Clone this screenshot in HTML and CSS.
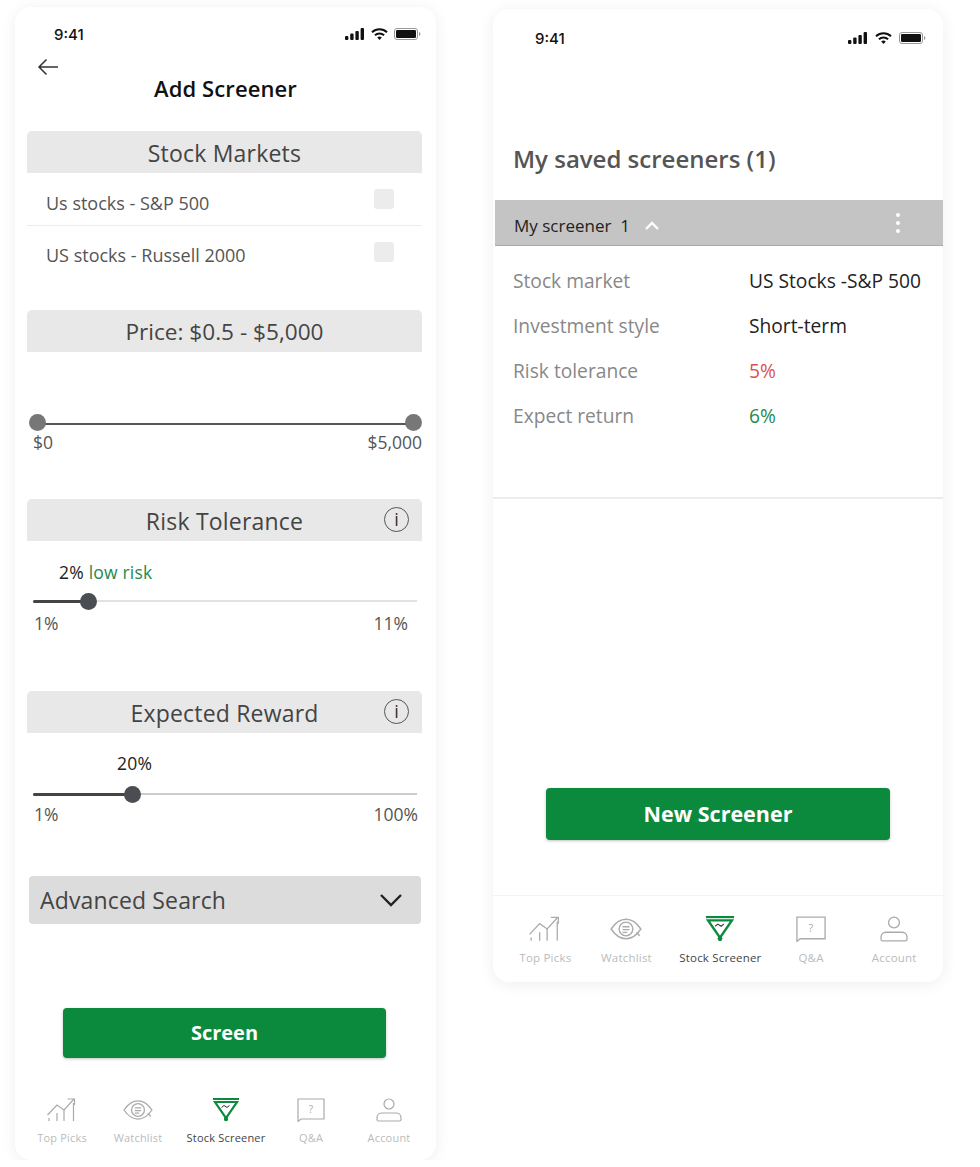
FILE: index.html
```html
<!DOCTYPE html>
<html>
<head>
  <title>Stock Screener</title>
  <link rel="stylesheet" href="styles.css">
</head>
<body>

  <svg class="icon-defs" width="0" height="0">
    <symbol id="status-signal" viewBox="0 0 20 12">
      <rect x="0" y="8" width="3.4" height="4" rx="1"/>
      <rect x="5.2" y="5.6" width="3.4" height="6.4" rx="1"/>
      <rect x="10.4" y="3" width="3.4" height="9" rx="1"/>
      <rect x="15.6" y="0" width="3.4" height="12" rx="1"/>
    </symbol>
    <symbol id="status-wifi" viewBox="0 0 17 12">
      <path d="M1 4.2a11 11 0 0 1 15 0" fill="none" stroke="currentColor" stroke-width="2"/>
      <path d="M3.9 7.2a6.8 6.8 0 0 1 9.2 0" fill="none" stroke="currentColor" stroke-width="2"/>
      <path d="M6.2 9.6a3.4 3.4 0 0 1 4.6 0L8.5 12z"/>
    </symbol>
    <symbol id="status-battery" viewBox="0 0 27 12">
      <rect x="0.5" y="0.5" width="23" height="11" rx="2.5" fill="none" stroke="#999"/>
      <rect x="2" y="2" width="20" height="8" rx="1.2"/>
      <path d="M25 4v4a2 2 0 0 0 1.4-2A2 2 0 0 0 25 4z" fill="#999"/>
    </symbol>

    <symbol id="tab-picks" viewBox="0 0 30 24">
      <g fill="none" stroke="#aaa" stroke-width="1.2">
        <path d="M0.500 17 10 7l7 5L27 1"/>
        <path d="M20.500 1h7v6"/>
        <path d="M26.500 5v18M17 12v11M10 15v8M2 20v3"/>
      </g>
    </symbol>
    <symbol id="tab-eye" viewBox="0 0 28 20">
      <g fill="none" stroke="#aaa" stroke-width="1.2">
        <path d="M1 10C5 4 9 1.500 14 1.500S23 4 27 10c-4 6-8 8.500-13 8.500S5 16 1 10z"/>
        <circle cx="14" cy="10" r="6"/>
        <path d="M11 8h6M11 10.500h6M11 13h4M23 13l3 3"/>
      </g>
    </symbol>
    <symbol id="tab-funnel" viewBox="0 0 28 24">
      <path d="M1 1h26" fill="none" stroke="#0b8a3e" stroke-width="2"/>
      <path d="M3 4h22L14 20z" fill="none" stroke="#0b8a3e" stroke-width="2.200"/>
      <path d="M9.500 9.500l2.500-2 3 2 2.500-2" fill="none" stroke="#333" stroke-width="1"/>
      <circle cx="14" cy="21" r="2.200" fill="#0b8a3e"/>
    </symbol>
    <symbol id="tab-account" viewBox="0 0 26 24">
      <g fill="none" stroke="#aaa" stroke-width="1.200">
        <circle cx="13" cy="6" r="5"/>
        <path d="M1 21.500v-2c0-3 2.500-4.500 5-4.500h14c2.500 0 5 1.500 5 4.500v2c0 1-.5 1.500-1.500 1.500h-21c-1 0-1.500-.5-1.500-1.500z"/>
      </g>
    </symbol>
  </svg>

  <!-- Add screener phone -->
  <div class="phone phone-add">
    <div class="status-bar">
      <span class="status-time">9:41</span>
      <div class="status-icons">
        <svg class="ic-signal"><use href="#status-signal"/></svg>
        <svg class="ic-wifi"><use href="#status-wifi"/></svg>
        <svg class="ic-battery"><use href="#status-battery"/></svg>
      </div>
    </div>

    <div class="back-row">
      <svg class="back-arrow" viewBox="0 0 22 18">
        <path d="M21 9H2M9.500 1.500 2 9l7.500 7.500" fill="none" stroke="#333" stroke-width="1.500"/>
      </svg>
    </div>
    <h1 class="page-title">Add Screener</h1>

    <div class="section section-markets">
      <div class="section-head">Stock Markets</div>
      <div class="market-row market-first">
        <span>Us stocks - S&amp;P 500</span>
        <span class="checkbox"></span>
      </div>
      <div class="market-row market-second">
        <span>US stocks - Russell 2000</span>
        <span class="checkbox"></span>
      </div>
    </div>

    <div class="section section-price">
      <div class="section-head">Price: $0.5 - $5,000</div>
      <div class="range-track">
        <span class="range-dot range-dot-left"></span>
        <span class="range-dot range-dot-right"></span>
      </div>
      <div class="range-labels">
        <span>$0</span>
        <span>$5,000</span>
      </div>
    </div>

    <div class="section section-risk">
      <div class="section-head">
        Risk Tolerance
        <span class="info">i</span>
      </div>
      <div class="slider-value slider-value-risk">2% <span class="txt-green">low risk</span></div>
      <div class="slider">
        <div class="slider-fill" style="width: 55px"><span class="slider-thumb"></span></div>
      </div>
      <div class="slider-labels">
        <span>1%</span>
        <span>11%</span>
      </div>
    </div>

    <div class="section section-reward">
      <div class="section-head">
        Expected Reward
        <span class="info">i</span>
      </div>
      <div class="slider-value slider-value-reward">20%</div>
      <div class="slider">
        <div class="slider-fill" style="width: 99px"><span class="slider-thumb"></span></div>
      </div>
      <div class="slider-labels">
        <span>1%</span>
        <span>100%</span>
      </div>
    </div>

    <div class="advanced">
      <span>Advanced Search</span>
      <svg class="advanced-chevron" viewBox="0 0 24 14">
        <path d="M2 2l10 10L22 2" fill="none" stroke="#222" stroke-width="2.400"/>
      </svg>
    </div>

    <a class="btn-green btn-screen" href="#">Screen</a>

    <div class="tabbar">
      <div class="tab"><svg class="tab-icon"><use href="#tab-picks"/></svg><span>Top Picks</span></div>
      <div class="tab"><svg class="tab-icon"><use href="#tab-eye"/></svg><span>Watchlist</span></div>
      <div class="tab tab-active"><svg class="tab-icon"><use href="#tab-funnel"/></svg><span>Stock Screener</span></div>
      <div class="tab">
        <svg class="tab-icon" viewBox="0 0 28 24">
          <path d="M1 1h26v20H4l-3 2.500z" fill="none" stroke="#aaa" stroke-width="1.200"/>
          <text x="14" y="15" text-anchor="middle" class="qa-mark">?</text>
        </svg>
        <span>Q&amp;A</span>
      </div>
      <div class="tab"><svg class="tab-icon"><use href="#tab-account"/></svg><span>Account</span></div>
    </div>
  </div>

  <!-- Saved screeners phone -->
  <div class="phone phone-saved">
    <div class="status-bar">
      <span class="status-time">9:41</span>
      <div class="status-icons">
        <svg class="ic-signal"><use href="#status-signal"/></svg>
        <svg class="ic-wifi"><use href="#status-wifi"/></svg>
        <svg class="ic-battery"><use href="#status-battery"/></svg>
      </div>
    </div>

    <h2 class="saved-title">My saved screeners (1)</h2>

    <div class="saved-band">
      <span class="saved-name">My screener&nbsp; 1</span>
      <svg class="saved-chevron" viewBox="0 0 16 10">
        <path d="M2 8l6-6 6 6" fill="none" stroke="#fff" stroke-width="2.400"/>
      </svg>
      <span class="saved-menu"><i></i><i></i><i></i></span>
    </div>

    <div class="saved-details">
      <div class="detail-row"><span class="detail-label">Stock market</span><span>US Stocks -S&amp;P 500</span></div>
      <div class="detail-row"><span class="detail-label">Investment style</span><span>Short-term</span></div>
      <div class="detail-row"><span class="detail-label">Risk tolerance</span><span class="txt-red">5%</span></div>
      <div class="detail-row"><span class="detail-label">Expect return</span><span class="txt-green">6%</span></div>
    </div>

    <a class="btn-green btn-new" href="#">New Screener</a>

    <div class="tabbar">
      <div class="tab"><svg class="tab-icon"><use href="#tab-picks"/></svg><span>Top Picks</span></div>
      <div class="tab"><svg class="tab-icon"><use href="#tab-eye"/></svg><span>Watchlist</span></div>
      <div class="tab tab-active"><svg class="tab-icon"><use href="#tab-funnel"/></svg><span>Stock Screener</span></div>
      <div class="tab">
        <svg class="tab-icon" viewBox="0 0 28 24">
          <path d="M1 1h26v20H4l-3 2.500z" fill="none" stroke="#aaa" stroke-width="1.200"/>
          <text x="14" y="15" text-anchor="middle" class="qa-mark">?</text>
        </svg>
        <span>Q&amp;A</span>
      </div>
      <div class="tab"><svg class="tab-icon"><use href="#tab-account"/></svg><span>Account</span></div>
    </div>
  </div>

</body>
</html>
```

FILE: styles.css
```css
body {
  font-family: 'Open Sans', sans-serif;
  background-color: white;
  color: #444;
  margin: 0;
  padding: 7px 0 0 15px;
  display: flex;
  align-items: flex-start;
  gap: 57px;
}

.icon-defs {
  position: absolute;
}

.phone {
  background-color: white;
  border-radius: 16px;
  box-shadow: 0 2px 16px rgba(0, 0, 0, 0.07);
  box-sizing: border-box;
}

.phone-add {
  width: 421px;
  height: 1153px;
}

.phone-saved {
  width: 450px;
  height: 973px;
  margin-top: 2px;
}

/* Status bar */
.status-bar {
  display: flex;
  justify-content: space-between;
  align-items: center;
  height: 18px;
  padding: 18px 15px 0 39px;
  color: #111;
}

.phone-saved .status-bar {
  padding: 20px 17px 0 42px;
}

.status-time {
  font-family: 'Inter', sans-serif;
  font-size: 15px;
  font-weight: 500;
}

.status-icons {
  display: flex;
  align-items: center;
  gap: 6px;
}

.phone-saved .status-icons {
  gap: 7px;
}

.status-icons svg {
  fill: #111;
  color: #111;
  height: 12px;
}

.ic-signal { width: 20px; }
.ic-wifi { width: 17px; }
.ic-battery { width: 27px; }

/* Header */
.back-row {
  height: 30px;
  padding: 6px 0 0 22px;
  box-sizing: border-box;
}

.back-arrow {
  display: block;
  width: 22px;
  height: 18px;
  margin-top: 9px;
}

.page-title {
  margin: 0;
  height: 30px;
  line-height: 30px;
  font-size: 22px;
  font-weight: 600;
  letter-spacing: 0.1px;
  text-align: center;
  color: #111;
}

/* Sections */
.section {
  margin: 0 14px 0 12px;
}

.section-markets { margin-top: 28px; }
.section-price { margin-top: 32px; }
.section-risk { margin-top: 47px; }
.section-reward { margin-top: 57px; }

.section-head {
  position: relative;
  height: 42px;
  line-height: 44px;
  background-color: #e8e8e8;
  border-radius: 5px 5px 0 0;
  font-size: 23px;
  letter-spacing: 0.2px;
  text-align: center;
}

.section-price .section-head {
  font-size: 22.600px;
  letter-spacing: 0;
}

.market-row {
  display: flex;
  justify-content: space-between;
  height: 52px;
  padding: 18px 28px 0 19px;
  box-sizing: border-box;
  font-size: 18px;
  line-height: 24px;
  color: #555;
}

.market-first {
  height: 53px;
  border-bottom: 1px solid #ececec;
}

.market-second {
  padding-top: 17px;
}

.checkbox {
  width: 20px;
  height: 20px;
  margin-top: -2px;
  background-color: #ececec;
  border-radius: 3px;
}

.market-second .checkbox {
  margin-top: -1px;
}

/* Price range */
.range-track {
  position: relative;
  height: 2px;
  margin: 71px 8px 0 10px;
  background-color: #555;
}

.range-dot {
  position: absolute;
  top: -9px;
  width: 17px;
  height: 17px;
  border-radius: 50%;
  background-color: #777;
}

.range-dot-left { left: -8px; }
.range-dot-right { right: -8px; }

.range-labels {
  display: flex;
  justify-content: space-between;
  margin: 7px 0 0 6px;
  font-size: 17.500px;
  line-height: 20px;
  color: #555;
}

/* Sliders */
.info {
  position: absolute;
  top: 8px;
  right: 13px;
  box-sizing: border-box;
  width: 25px;
  height: 25px;
  border: 1px solid #555;
  border-radius: 50%;
  font-size: 18px;
  line-height: 22px;
  color: #333;
}

.slider-value {
  font-size: 17.500px;
  letter-spacing: 0.2px;
  line-height: 22px;
  color: #222;
}

.slider-value-risk { margin: 20px 0 0 32px; }
.slider-value-reward { margin: 19px 0 0 90px; }

.slider {
  height: 2px;
  margin: 17px 5px 0 6px;
  background-color: #e2e2e2;
}

.slider-value-reward + .slider {
  margin-top: 19px;
  background-color: #ccc;
}

.slider-fill {
  position: relative;
  height: 3px;
  background-color: #444;
  border-radius: 2px;
}

.slider-thumb {
  position: absolute;
  top: -7px;
  right: -9px;
  width: 17px;
  height: 17px;
  border-radius: 50%;
  background-color: #4a4d52;
}

.slider-labels {
  display: flex;
  justify-content: space-between;
  margin: 10px 14px 0 7px;
  font-size: 17.500px;
  line-height: 22px;
  color: #555;
}

.section-reward .slider-labels {
  margin: 8px 4px 0 7px;
}

.txt-green { color: #1f8a50; }
.txt-red { color: #d9534f; }

/* Advanced search */
.advanced {
  display: flex;
  justify-content: space-between;
  align-items: center;
  height: 48px;
  margin: 51px 15px 0 14px;
  padding: 0 18px 0 11px;
  box-sizing: border-box;
  background-color: #dcdcdc;
  border-radius: 4px;
  font-size: 23px;
  letter-spacing: 0.15px;
  color: #444;
}

.advanced-chevron {
  width: 24px;
  height: 14px;
}

/* Buttons */
.btn-green {
  display: block;
  background-color: #0b8a3e;
  color: white;
  font-weight: 700;
  text-align: center;
  text-decoration: none;
  border-radius: 4px;
  box-shadow: 0 1px 3px rgba(0, 0, 0, 0.25);
}

.btn-screen {
  width: 323px;
  height: 50px;
  margin: 84px 0 0 48px;
  font-size: 20px;
  line-height: 50px;
}

.btn-new {
  width: 344px;
  height: 52px;
  margin: 0 0 0 53px;
  font-size: 21.500px;
  line-height: 52px;
}

/* Saved screeners */
.saved-title {
  margin: 92px 0 0 20px;
  height: 40px;
  line-height: 40px;
  font-size: 24px;
  font-weight: 600;
  color: #555;
}

.saved-band {
  display: flex;
  align-items: center;
  height: 46px;
  margin: 21px 0 0 2px;
  padding: 6px 43px 0 19px;
  background-color: #c4c4c4;
  border-bottom: 1px solid #aaa;
  box-sizing: border-box;
  font-size: 17px;
  color: #222;
}

.saved-chevron {
  width: 16px;
  height: 10px;
  margin-left: 14px;
}

.saved-menu {
  display: flex;
  flex-direction: column;
  gap: 4px;
  margin: -6px 0 0 auto;
}

.saved-menu i {
  display: block;
  width: 4px;
  height: 4px;
  background-color: white;
  border-radius: 50%;
}

.saved-details {
  height: 253px;
  padding: 11.500px 0 0 20px;
  box-sizing: border-box;
  border-bottom: 2px solid #ececec;
  margin-bottom: 289px;
}

.detail-row {
  display: grid;
  grid-template-columns: 236px 1fr;
  height: 45.300px;
  line-height: 45px;
  font-size: 19.200px;
  color: #222;
}

.detail-label {
  color: #888;
}

/* Tab bar */
.tabbar {
  display: grid;
  grid-template-columns: 72fr 80fr 96fr 74fr 82fr;
  padding: 0 6px 0 11px;
}

.phone-add .tabbar { margin-top: 40px; }

.phone-saved .tabbar {
  margin-top: 55px;
  padding: 20px 5px 0 14px;
  border-top: 1px solid #f3f3f3;
}

.tab {
  display: flex;
  flex-direction: column;
  align-items: center;
  gap: 9px;
  font-size: 11px;
  letter-spacing: 0.2px;
  line-height: 14px;
  color: #bbb;
}

.phone-saved .tab {
  font-size: 11.500px;
}

.tab-active {
  color: #444;
}

.tab-icon {
  width: 30px;
  height: 24px;
}

.phone-saved .tab-icon {
  width: 32px;
  height: 26px;
}

.qa-mark {
  font-family: 'Open Sans', sans-serif;
  font-size: 10px;
  fill: #aaa;
}
```
